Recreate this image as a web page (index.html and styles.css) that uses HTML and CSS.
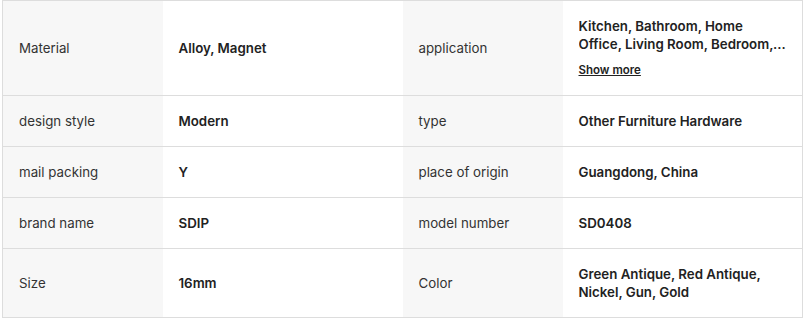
FILE: index.html
```html
<!DOCTYPE html>
<html>
<head>
<meta charset="utf-8">
<link rel="stylesheet" href="styles.css">
</head>
<body>
<div class="wrap">
<table class="attrs">
  <colgroup><col class="c-label"><col class="c-value"><col class="c-label"><col class="c-value"></colgroup>
  <tr>
    <td class="label">Material</td>
    <td class="value">Alloy, Magnet</td>
    <td class="label">application</td>
    <td class="value">
      <div class="clamp">Kitchen, Bathroom, Home Office, Living Room, Bedroom, Dining, Outdoor, Hotel, Villa, Apartment</div>
      <a class="more" href="#">Show more</a>
    </td>
  </tr>
  <tr>
    <td class="label">design style</td>
    <td class="value">Modern</td>
    <td class="label">type</td>
    <td class="value">Other Furniture Hardware</td>
  </tr>
  <tr>
    <td class="label">mail packing</td>
    <td class="value">Y</td>
    <td class="label">place of origin</td>
    <td class="value">Guangdong, China</td>
  </tr>
  <tr>
    <td class="label">brand name</td>
    <td class="value">SDIP</td>
    <td class="label">model number</td>
    <td class="value">SD0408</td>
  </tr>
  <tr>
    <td class="label">Size</td>
    <td class="value">16mm</td>
    <td class="label">Color</td>
    <td class="value">Green Antique, Red Antique, Nickel, Gun, Gold</td>
  </tr>
</table>
</div>
</body>
</html>
```
FILE: styles.css
```css
html, body {
  margin: 0;
  padding: 0;
  background: #fff;
}
.wrap {
  padding-left: 2px;
}
.attrs {
  border-collapse: collapse;
  table-layout: fixed;
  width: 801px;
  border: 1px solid #dddddd;
  font-family: Inter, "Noto Sans", sans-serif;
  font-size: 13.3px;
  line-height: 18px;
  color: #222;
}
.c-label { width: 160px; }
.c-value { width: 240px; }
.attrs td {
  border-top: 1px solid #dddddd;
  border-bottom: 1px solid #dddddd;
  padding: 16px;
  vertical-align: middle;
}
.label {
  background: #f7f7f7;
  color: #333;
  font-weight: 400;
}
.value {
  background: #fff;
  font-weight: 600;
  color: #222;
}
.clamp {
  display: -webkit-box;
  -webkit-box-orient: vertical;
  -webkit-line-clamp: 2;
  overflow: hidden;
  max-height: 36px;
}
.more {
  display: block;
  margin-top: 8px;
  font-size: 11.5px;
  line-height: 18px;
  color: #222;
  text-decoration: underline;
  font-weight: 600;
}
```
